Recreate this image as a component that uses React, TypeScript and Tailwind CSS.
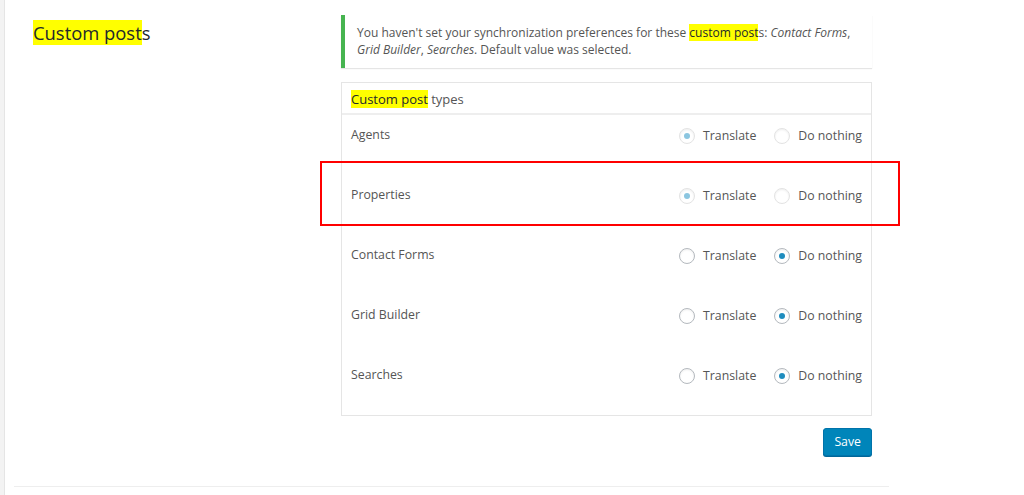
import React from 'react';

type Row = { label: string; value: 'translate' | 'nothing'; disabled?: boolean };

const ROWS: Row[] = [
  { label: 'Agents', value: 'translate', disabled: true },
  { label: 'Properties', value: 'translate', disabled: true },
  { label: 'Contact Forms', value: 'nothing' },
  { label: 'Grid Builder', value: 'nothing' },
  { label: 'Searches', value: 'nothing' },
];

function Radio({ checked, disabled }: { checked: boolean; disabled?: boolean }) {
  return (
    <span
      className={`flex h-[16px] w-[16px] items-center justify-center rounded-full border shadow-[inset_0_1px_2px_rgba(0,0,0,0.07)] ${
        disabled ? 'border-[#e3e3e3] bg-white/50' : 'border-[#b4b9be] bg-white'
      }`}
    >
      {checked && (
        <span className={`h-[6px] w-[6px] rounded-full ${disabled ? 'bg-[#8cc6e0]' : 'bg-[#1e8cbe]'}`} />
      )}
    </span>
  );
}

function Option({ label, checked, disabled }: { label: string; checked: boolean; disabled?: boolean }) {
  return (
    <label className="flex items-center gap-[8px]">
      <Radio checked={checked} disabled={disabled} />
      <span className="text-[#555]">{label}</span>
    </label>
  );
}

export default function App() {
  return (
    <div
      className="flex min-h-screen bg-white text-[12.3px] leading-[17px] text-[#444]"
      style={{ fontFamily: '"Open Sans", "Noto Sans", sans-serif' }}
    >
      {/* admin edge */}
      <div className="w-[5px] shrink-0 border-r border-[#e5e5e5] bg-[#f3f3f3]" />

      <div className="ml-[9px] w-[875px] self-start border-b border-[#eee] pb-[30px] pt-[15px]">
        <div className="flex pl-[19px]">
          {/* Section title */}
          <div className="w-[308px] shrink-0 pt-[5px]">
            <h2 className="text-[18.4px] leading-[25px] text-[#23282d]">
              <span className="bg-[#ffff00]">Custom post</span>s
            </h2>
          </div>

          {/* Settings column */}
          <div className="w-[531px]">
            <div className="border-l-4 border-[#46b450] bg-white pb-[10px] pl-[12px] pr-[8px] pt-[9px] text-[12px] shadow-[0_1px_1px_rgba(0,0,0,0.1)]">
              <p className="text-[#555]">
                You haven't set your synchronization preferences for these{' '}
                <span className="bg-[#ffff00] text-[#23282d]">custom post</span>s: <em>Contact Forms</em>,{' '}
                <em>Grid Builder</em>, <em>Searches</em>. Default value was selected.
              </p>
            </div>

            <div className="mt-[14px] border border-[#e5e5e5] bg-white">
              <div className="border-b-2 border-[#eeeeee] px-[9px] pb-[5px] pt-[8px] text-[13px] text-[#555]">
                <span className="bg-[#ffff00] text-[#23282d]">Custom post</span> types
              </div>
              {ROWS.map((row) => (
                <div key={row.label} className="relative flex h-[60px] items-start justify-between px-[9px] pt-[11px]">
                  <span className="text-[#555]">{row.label}</span>
                  <div className="flex items-center gap-[18px] pt-[1px]">
                    <Option label="Translate" checked={row.value === 'translate'} disabled={row.disabled} />
                    <Option label="Do nothing" checked={row.value === 'nothing'} disabled={row.disabled} />
                  </div>
                  {row.label === 'Properties' && (
                    <div className="pointer-events-none absolute -left-[22px] -right-[29px] -top-[14px] h-[65px] border-2 border-[#ff0000]" />
                  )}
                </div>
              ))}
            </div>

            <div className="mt-[12px] flex justify-end">
              <button className="h-[28px] rounded-[3px] border border-[#0073aa] bg-[#0085ba] px-[10px] leading-[26px] text-white shadow-[0_1px_0_#006799]">
                Save
              </button>
            </div>
          </div>
        </div>
      </div>
    </div>
  );
}
